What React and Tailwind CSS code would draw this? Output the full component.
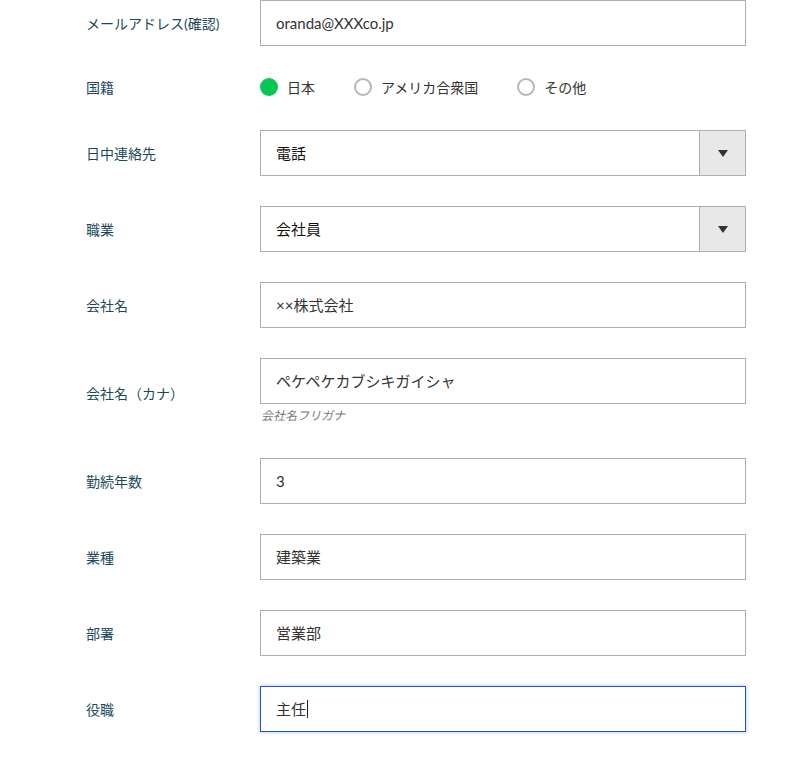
import React from "react";

const font = { fontFamily: '"Lato", "Noto Sans CJK JP", sans-serif' };

const Label = ({ children }) => (
  <div className="w-[174px] shrink-0 text-[14px] font-normal text-[#1b4a5c]">{children}</div>
);

const TextInput = ({ value, focused }) => (
  <div
    className={`flex h-[46px] w-[486px] items-center border bg-white pl-[15px] text-[15px] text-[#333] ${
      focused ? "border-[#1d52c9] shadow-[0_0_4px_rgba(29,82,201,0.35)]" : "border-[#aab0b0]"
    }`}
  >
    <span>{value}</span>
    {focused && <span className="ml-[1px] inline-block h-[18px] w-px bg-[#222]" />}
  </div>
);

const Select = ({ value }) => (
  <div className="flex h-[46px] w-[486px] items-stretch border border-[#aab0b0] bg-white">
    <div className="flex flex-1 items-center pl-[15px] text-[15px] text-[#111]">{value}</div>
    <div className="flex w-[46px] items-center justify-center border-l border-[#aab0b0] bg-[#e8e8e8]">
      <svg width="10" height="7" viewBox="0 0 10 7">
        <path d="M0 0 L10 0 L5 7 Z" fill="#333" />
      </svg>
    </div>
  </div>
);

const Radio = ({ checked, label }) => (
  <div className="flex items-center gap-[9px]">
    {checked ? (
      <span className="inline-block h-[18px] w-[18px] rounded-full bg-[#06c755]" />
    ) : (
      <span className="inline-block h-[18px] w-[18px] rounded-full border-2 border-[#b3b8b8]" />
    )}
    <span className="text-[14px] text-[#333]">{label}</span>
  </div>
);

const Row = ({ label, children }) => (
  <div className="flex items-center">
    <Label>{label}</Label>
    <div>{children}</div>
  </div>
);

export default function App() {
  return (
    <div className="min-h-[765px] w-[792px] bg-white pl-[86px]" style={font}>
      <div className="flex flex-col">
        <Row label="メールアドレス(確認)">
          <TextInput value="oranda@XXXco.jp" />
        </Row>
        <div className="flex h-[84px] items-center pb-[2px]">
          <Label>国籍</Label>
          <div className="flex items-center gap-[39px]">
            <Radio checked label="日本" />
            <Radio label="アメリカ合衆国" />
            <Radio label="その他" />
          </div>
        </div>
        <div className="flex flex-col gap-[30px]">
          <Row label="日中連絡先">
            <Select value="電話" />
          </Row>
          <Row label="職業">
            <Select value="会社員" />
          </Row>
          <Row label="会社名">
            <TextInput value="××株式会社" />
          </Row>
          <Row label="会社名（カナ）">
            <TextInput value="ペケペケカブシキガイシャ" />
            <div className="h-[24px] pl-px pt-[5px] text-[12px] italic leading-[14px] text-[#777]">
              会社名フリガナ
            </div>
          </Row>
          <Row label="勤続年数">
            <TextInput value="3" />
          </Row>
          <Row label="業種">
            <TextInput value="建築業" />
          </Row>
          <Row label="部署">
            <TextInput value="営業部" />
          </Row>
          <Row label="役職">
            <TextInput value="主任" focused />
          </Row>
        </div>
      </div>
    </div>
  );
}
